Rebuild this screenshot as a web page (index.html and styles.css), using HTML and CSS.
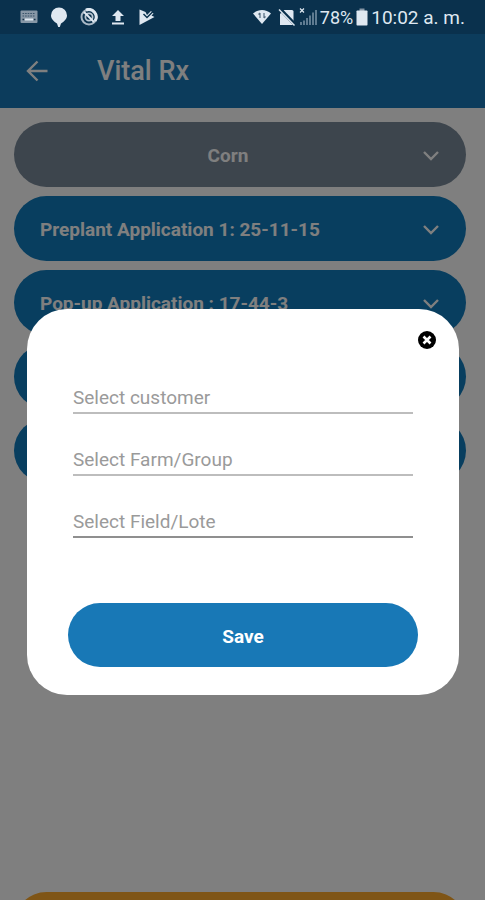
FILE: index.html
```html
<!doctype html>
<html lang="en">

<head>
    <meta charset="utf-8">
    <meta name="viewport" content="width=device-width, initial-scale=1">
    <title>Vital Rx</title>
    <link rel="stylesheet" href="styles.css">
</head>
<body>
  <div class="app">

    <!-- Phone status bar -->
    <div class="status-bar">
      <div class="status-icons">
        <svg width="18" height="14" viewBox="0 0 18 14">
          <rect x="0.5" y="0.5" width="17" height="12.5" rx="1" fill="#8797a6"/>
          <path d="M2.5 3.5h13M2.5 6h13" stroke="#3a546a" stroke-width="1.2" stroke-dasharray="1.6 1"/>
          <path d="M5 9.5h8" stroke="#dfe8f1" stroke-width="2"/>
          <path d="M2.5 9.5h1.5M14 9.5h1.5" stroke="#17344b" stroke-width="1.5"/>
        </svg>
        <svg width="18" height="20" viewBox="0 0 18 20">
          <path d="M9 0.5a8 8 0 0 1 8 8c0 3.500-3 6-6 8L9.800 20H8.200L7 16.500C4 14.500 1 12 1 8.500a8 8 0 0 1 8-8z" fill="#dfe8f1"/>
        </svg>
        <svg width="18" height="18" viewBox="0 0 18 18">
          <circle cx="9" cy="9" r="7.5" fill="none" stroke="#a9b8c5" stroke-width="2"/>
          <path d="M6 2a7.500 7.500 0 0 1 9 11" fill="none" stroke="#dfe8f1" stroke-width="3"/>
          <circle cx="9" cy="9" r="3.600" fill="none" stroke="#b9c6d2" stroke-width="1.800"/>
          <path d="M4 4l10 10" stroke="#dfe8f1" stroke-width="2"/>
        </svg>
        <svg width="16" height="18" viewBox="0 0 16 18">
          <path d="M8 2l6 6h-3.500v5h-5V8H2zM2 14.500h12v2H2z" fill="#dfe8f1"/>
        </svg>
        <svg width="18" height="18" viewBox="0 0 18 18">
          <path d="M1.500 1.500l6 2.500L9 7l4-4 2.500 2.500-2 2 3 1.500L1.500 17z" fill="#dfe8f1"/>
          <path d="M5.500 6l3.500 3.500L15.500 3" fill="none" stroke="#0a314d" stroke-width="1.500"/>
        </svg>
      </div>
      <div class="status-info">
        <svg width="20" height="18" viewBox="0 0 20 18">
          <path d="M1 5.500C6 0.800 14 0.800 19 5.500L10 16z" fill="#dfe8f1"/>
          <path d="M8 5v5M8 5l-1.500 1.500M12 10V5M12 10l1.500-1.500" stroke="#52697d" stroke-width="1.200" fill="none"/>
        </svg>
        <svg class="sim" width="18" height="18" viewBox="0 0 18 18">
          <path d="M6 2h8q1.500 0 1.500 1.500V17H2V6z" fill="#dfe8f1"/>
          <path d="M1.500 0.500L17.500 17" stroke="#0a314d" stroke-width="3.600"/>
          <path d="M1 1.500L16.500 17.500" stroke="#dfe8f1" stroke-width="1.400"/>
        </svg>
        <svg class="signal" width="18" height="18" viewBox="0 0 18 18">
          <path d="M1 0.500l4 4M5 0.500l-4 4" stroke="#dfe8f1" stroke-width="1.200"/>
          <path d="M2 17v-3M5 17v-4.500M8 17v-7M11 17V7.500M14 17V4.500M17 17V2" stroke="#5f7b91" stroke-width="2"/>
        </svg>
        <span class="battery-level">78%</span>
        <svg class="battery" width="12" height="18" viewBox="0 0 12 18">
          <path d="M3.500 0.500h5V3h-5z" fill="#8797a6"/>
          <rect x="0.500" y="2.500" width="11" height="15" rx="0.800" fill="#dfe8f1"/>
        </svg>
        <span class="clock">10:02 a. m.</span>
      </div>
    </div>

    <header class="toolbar">
      <button type="button" class="back-button" aria-label="Back">
        <svg width="22" height="22" viewBox="0 0 22 22" fill="none" stroke="#fff" stroke-width="2.400">
          <path d="M21.500 11H2M11.500 1.500L2 11l9.500 9.500"/>
        </svg>
      </button>
      <h1 class="title">Vital Rx</h1>
    </header>

    <main class="content">
      <button type="button" class="pill pill-crop">
        <span class="pill-text">Corn</span>
        <svg class="chevron" width="18" height="12" viewBox="0 0 18 12"><path d="M2 2l7 7 7-7"/></svg>
      </button>
      <button type="button" class="pill">
        <span class="pill-text">Preplant Application 1: 25-11-15</span>
        <svg class="chevron" width="18" height="12" viewBox="0 0 18 12"><path d="M2 2l7 7 7-7"/></svg>
      </button>
      <button type="button" class="pill">
        <span class="pill-text">Pop-up Application : 17-44-3</span>
        <svg class="chevron" width="18" height="12" viewBox="0 0 18 12"><path d="M2 2l7 7 7-7"/></svg>
      </button>
      <button type="button" class="pill"></button>
      <button type="button" class="pill"></button>
      <button type="button" class="pill pill-bottom"></button>
    </main>

    <!-- Save dialog -->
    <div class="overlay">
      <form class="dialog">
        <button type="button" class="close-button" aria-label="Close">
          <svg width="20" height="20" viewBox="0 0 20 20">
            <circle cx="10" cy="10" r="9" fill="#000"/>
            <path d="M6.500 6.500l7 7M13.500 6.500l-7 7" stroke="#fff" stroke-width="2.600"/>
          </svg>
        </button>
        <div class="fields">
          <input type="text" class="field" placeholder="Select customer" aria-label="Select customer">
          <input type="text" class="field" placeholder="Select Farm/Group" aria-label="Select Farm/Group">
          <input type="text" class="field field-last" placeholder="Select Field/Lote" aria-label="Select Field/Lote">
        </div>
        <button type="button" class="save-button">Save</button>
      </form>
    </div>

  </div>
</body>
</html>
```
FILE: styles.css
```css
* {
  box-sizing: border-box;
}

body {
  margin: 0;
  font-family: Roboto, "Liberation Sans", sans-serif;
  background-color: #fff;
}

button {
  border: 0;
  padding: 0;
  background: none;
  font-family: inherit;
  cursor: pointer;
}

svg {
  display: block;
  flex: none;
}

.app {
  position: relative;
  display: flex;
  flex-direction: column;
  height: 100vh;
  overflow: hidden;
}

/* status bar */
.status-bar {
  display: flex;
  justify-content: space-between;
  align-items: center;
  height: 34px;
  padding: 0 20px;
  background-color: #0a314d;
  color: #dfe8f1;
}

.status-icons {
  display: flex;
  align-items: center;
  gap: 12px;
}

.status-info {
  display: flex;
  align-items: center;
  gap: 3px;
}

.sim {
  margin-left: 3px;
}

.battery-level {
  font-size: 18px;
}

.clock {
  font-size: 19px;
}

/* toolbar */
.toolbar {
  display: flex;
  align-items: center;
  gap: 49px;
  height: 74px;
  padding: 0 26px;
  background-color: #1878b8;
}

.title {
  margin: 0;
  color: #fff;
  font-size: 27px;
  font-weight: 500;
}

/* list */
.content {
  flex: 1;
  display: flex;
  flex-direction: column;
  gap: 9px;
  padding: 14px 19px 0 14px;
}

.pill {
  display: flex;
  align-items: center;
  gap: 6px;
  flex: none;
  height: 65px;
  padding: 2px 26px 0;
  border-radius: 33px;
  background-color: #107cbe;
  color: #fff;
  font-size: 19px;
  font-weight: 700;
  text-align: left;
}

.pill-text {
  flex: 1;
}

.pill-crop {
  background-color: #7a8a9a;
  text-align: center;
}

.pill-bottom {
  margin-top: auto;
  margin-bottom: -57px;
  background-color: #ffaa2c;
}

.chevron {
  fill: none;
  stroke: #fff;
  stroke-width: 2.4px;
}

/* dialog */
.overlay {
  position: absolute;
  top: 34px;
  right: 0;
  bottom: 0;
  left: 0;
  display: flex;
  align-items: center;
  padding: 70px 26px 0 27px;
  background-color: rgba(0, 0, 0, 0.5);
}

.dialog {
  display: flex;
  flex-direction: column;
  flex: 1;
  padding: 21px 41px 28px;
  border-radius: 40px;
  background-color: #fff;
}

.close-button {
  align-self: flex-end;
  margin-right: -19px;
}

.fields {
  display: flex;
  flex-direction: column;
  gap: 26px;
  padding: 28px 5px 65px;
}

.field {
  width: 100%;
  height: 36px;
  padding: 5px 0 0;
  border: 0;
  border-bottom: 2px solid #bdbdbd;
  outline: 0;
  background: none;
  color: #333;
  font-family: inherit;
  font-size: 19px;
}

.field::placeholder {
  color: #9a9a9a;
}

.field-last {
  border-bottom-color: #8f8f8f;
}

.save-button {
  height: 64px;
  padding-top: 2px;
  border-radius: 32px;
  background-color: #1878b6;
  color: #fff;
  font-size: 19px;
  font-weight: 700;
}
```
